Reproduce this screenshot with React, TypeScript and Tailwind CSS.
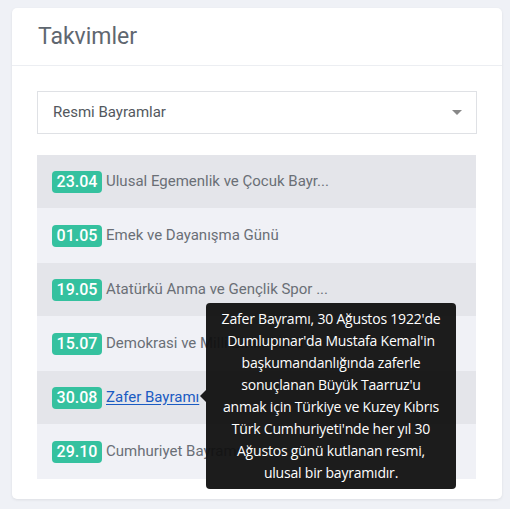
import React from "react";

const items = [
  { d: "23.04", t: "Ulusal Egemenlik ve Çocuk Bayr..." },
  { d: "01.05", t: "Emek ve Dayanışma Günü" },
  { d: "19.05", t: "Atatürkü Anma ve Gençlik Spor ..." },
  { d: "15.07", t: "Demokrasi ve Milli Birlik Günü" },
  { d: "30.08", t: "Zafer Bayramı", link: true },
  { d: "29.10", t: "Cumhuriyet Bayramı" },
];

const tipLines = [
  "Zafer Bayramı, 30 Ağustos 1922'de",
  "Dumlupınar'da Mustafa Kemal'in",
  "başkumandanlığında zaferle",
  "sonuçlanan Büyük Taarruz'u",
  "anmak için Türkiye ve Kuzey Kıbrıs",
  "Türk Cumhuriyeti'nde her yıl 30",
  "Ağustos günü kutlanan resmi,",
  "ulusal bir bayramıdır.",
];

export default function App() {
  return (
    <div
      className="w-[510px] h-[509px] bg-[#eff1f6] pt-[8px] px-[12px] pr-[8px]"
      style={{ fontFamily: "Roboto, 'Liberation Sans', sans-serif" }}
    >
      <div className="bg-white rounded-[5px] shadow-[0_1px_3px_rgba(0,0,0,0.08)] w-[490px] h-[491px] relative">
        <div className="h-[58px] border-b border-[#eceef2] pl-[26px] flex items-center">
          <h2 className="text-[23px] text-[#5f6770] pt-[1px]">Takvimler</h2>
        </div>
        <div className="px-[25px] pt-[25px] pb-[20px]">
          <div className="h-[43px] border border-[#dfe1e5] flex items-center justify-between pl-[15px] pr-[14px]">
            <span className="text-[15px] text-[#53585e]">Resmi Bayramlar</span>
            <span className="w-0 h-0 border-l-[5px] border-r-[5px] border-t-[5px] border-l-transparent border-r-transparent border-t-[#888888]" />
          </div>
          <ul className="mt-[21px] w-[439px]">
            {items.map((it, i) => (
              <li
                key={it.d}
                className={`flex items-center pl-[15px] ${i % 2 === 0 ? "bg-[#e4e5ea] h-[53px]" : "bg-[#f0f1f6] h-[55px]"}`}
              >
                <span className="bg-[#35c19f] text-white font-medium text-[16px] leading-[22px] h-[22px] w-[50px] rounded-[4px] text-center">
                  {it.d}
                </span>
                {it.link ? (
                  <a className="ml-[4px] text-[15px] text-[#1a5bc2] underline underline-offset-[2px]">{it.t}</a>
                ) : (
                  <span className="ml-[4px] text-[15px] text-[#6a6f76]">{it.t}</span>
                )}
              </li>
            ))}
          </ul>
        </div>
        <div
          className="absolute left-[194px] top-[295px] w-[250px] rounded-[4px] bg-[rgba(16,16,16,0.95)] text-white text-center text-[14px] leading-[22px] px-[4px] py-[5px] tracking-[-0.2px]"
          style={{ fontFamily: "'Open Sans', 'Noto Sans', sans-serif" }}
        >
          <span className="absolute left-[-6px] top-[87px] w-0 h-0 border-t-[6px] border-b-[6px] border-r-[6px] border-t-transparent border-b-transparent border-r-[rgba(16,16,16,0.95)]" />
          {tipLines.map((l) => (
            <div key={l} className="whitespace-nowrap">{l}</div>
          ))}
        </div>
      </div>
    </div>
  );
}
